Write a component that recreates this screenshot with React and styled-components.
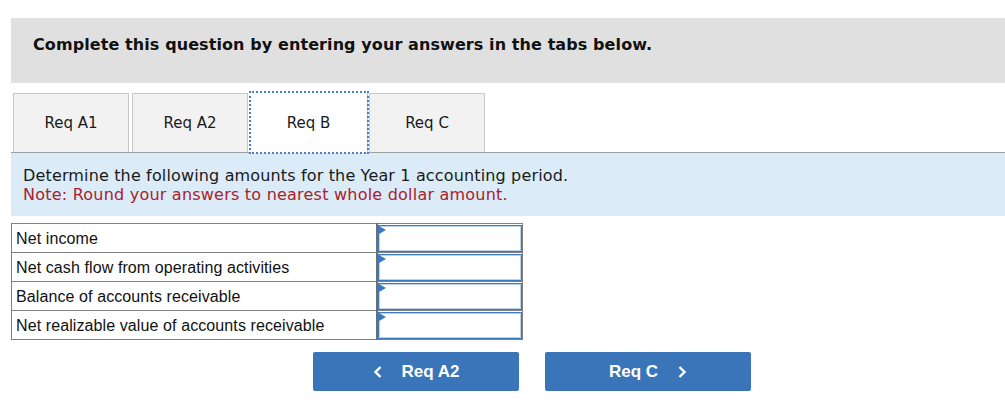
import React from "react";
import styled, { createGlobalStyle, css } from "styled-components";

const Global = createGlobalStyle`
  html, body { margin: 0; padding: 0; background: #fff; }
  body { width: 1005px; height: 410px; overflow: hidden; }
  * { box-sizing: border-box; }
`;

const Page = styled.div`
  padding: 18px 0 0 11px;
  font-family: "DejaVu Sans", Verdana, sans-serif;
`;

const Header = styled.div`
  height: 65px;
  background: #e0e0e0;
  padding: 17px 0 0 22px;
  font-weight: bold;
  font-size: 16px;
  letter-spacing: 0.09px;
  color: #111;
`;

const TabRow = styled.div`
  display: flex;
  align-items: flex-end;
  gap: 3px;
  margin-top: 10px;
  padding-left: 2px;
  height: 60px;
  border-bottom: 1px solid #a0a0a0;
`;

const Tab = styled.div`
  width: 116px;
  height: 59px;
  display: flex;
  align-items: center;
  justify-content: center;
  font-size: 15px;
  color: #1a1a1a;
  background: #f2f2f2;
  border: 1px solid #c8c8c8;
  border-bottom: none;
  ${(p) =>
    p.$active &&
    css`
      background: #fff;
      width: 118px;
      margin: 0 -2px -1px -1px;
      border: none;
      border-right: 1px solid #c8c8c8;
      outline: 2px dotted #4a7fc0;
      outline-offset: -1px;
      position: relative;
      height: 61px;
    `}
`;

const Instructions = styled.div`
  background: #dbebf8;
  padding: 13px 12px 12px;
  font-size: 16px;
  line-height: 19px;
  letter-spacing: 0.15px;
  color: #1a1a1a;
`;

const Note = styled.div`
  color: #a8222b;
  letter-spacing: 0.22px;
`;

const Table = styled.table`
  margin-top: 7px;
  border-collapse: collapse;
  font-family: "Liberation Sans", Arial, sans-serif;
  font-size: 16px;
  letter-spacing: 0.1px;
  color: #111;
`;

const LabelCell = styled.td`
  width: 365px;
  height: 29px;
  padding: 1px 4px 0;
  border: 1px solid #808080;
`;

const InputCell = styled.td`
  width: 146px;
  height: 29px;
  padding: 0;
  border: 1px solid #808080;
  border-left: 2px solid #6e6e6e;
`;

const InputBox = styled.div`
  position: relative;
  height: 27px;
  border: 1px solid #3b78c2;
  box-shadow: inset 0 0 0 1px #bcd3ee;
  background: #fff;
`;

const Marker = styled.span`
  position: absolute;
  left: 0;
  top: 0;
  width: 0;
  height: 0;
  border-top: 4px solid transparent;
  border-bottom: 4px solid transparent;
  border-left: 7px solid #3b78c2;
`;

const ButtonRow = styled.div`
  display: flex;
  gap: 26px;
  margin: 12px 0 0 302px;
`;

const NavButton = styled.button`
  width: 206px;
  height: 39px;
  border: none;
  border-radius: 2px;
  background: #3a75b9;
  color: #fff;
  font-family: "Liberation Sans", Arial, sans-serif;
  font-weight: bold;
  font-size: 17px;
  display: flex;
  align-items: center;
  justify-content: center;
  gap: 19px;
  padding: 0;
`;

const Chevron = ({ dir }) => (
  <svg width="10" height="14" viewBox="0 0 10 14">
    <path
      d={dir === "left" ? "M7.5 2 L2.5 7 L7.5 12" : "M2.5 2 L7.5 7 L2.5 12"}
      fill="none"
      stroke="#fff"
      strokeWidth="2.4"
    />
  </svg>
);

const rows = [
  "Net income",
  "Net cash flow from operating activities",
  "Balance of accounts receivable",
  "Net realizable value of accounts receivable",
];

export default function App() {
  return (
    <>
      <Global />
      <Page>
        <Header>Complete this question by entering your answers in the tabs below.</Header>
        <TabRow>
          <Tab>Req A1</Tab>
          <Tab>Req A2</Tab>
          <Tab $active>Req B</Tab>
          <Tab>Req C</Tab>
        </TabRow>
        <Instructions>
          <div>Determine the following amounts for the Year 1 accounting period.</div>
          <Note>Note: Round your answers to nearest whole dollar amount.</Note>
        </Instructions>
        <Table>
          <tbody>
            {rows.map((r) => (
              <tr key={r}>
                <LabelCell>{r}</LabelCell>
                <InputCell>
                  <InputBox>
                    <Marker />
                  </InputBox>
                </InputCell>
              </tr>
            ))}
          </tbody>
        </Table>
        <ButtonRow>
          <NavButton>
            <Chevron dir="left" />
            <span>Req A2</span>
          </NavButton>
          <NavButton>
            <span>Req C</span>
            <Chevron dir="right" />
          </NavButton>
        </ButtonRow>
      </Page>
    </>
  );
}
